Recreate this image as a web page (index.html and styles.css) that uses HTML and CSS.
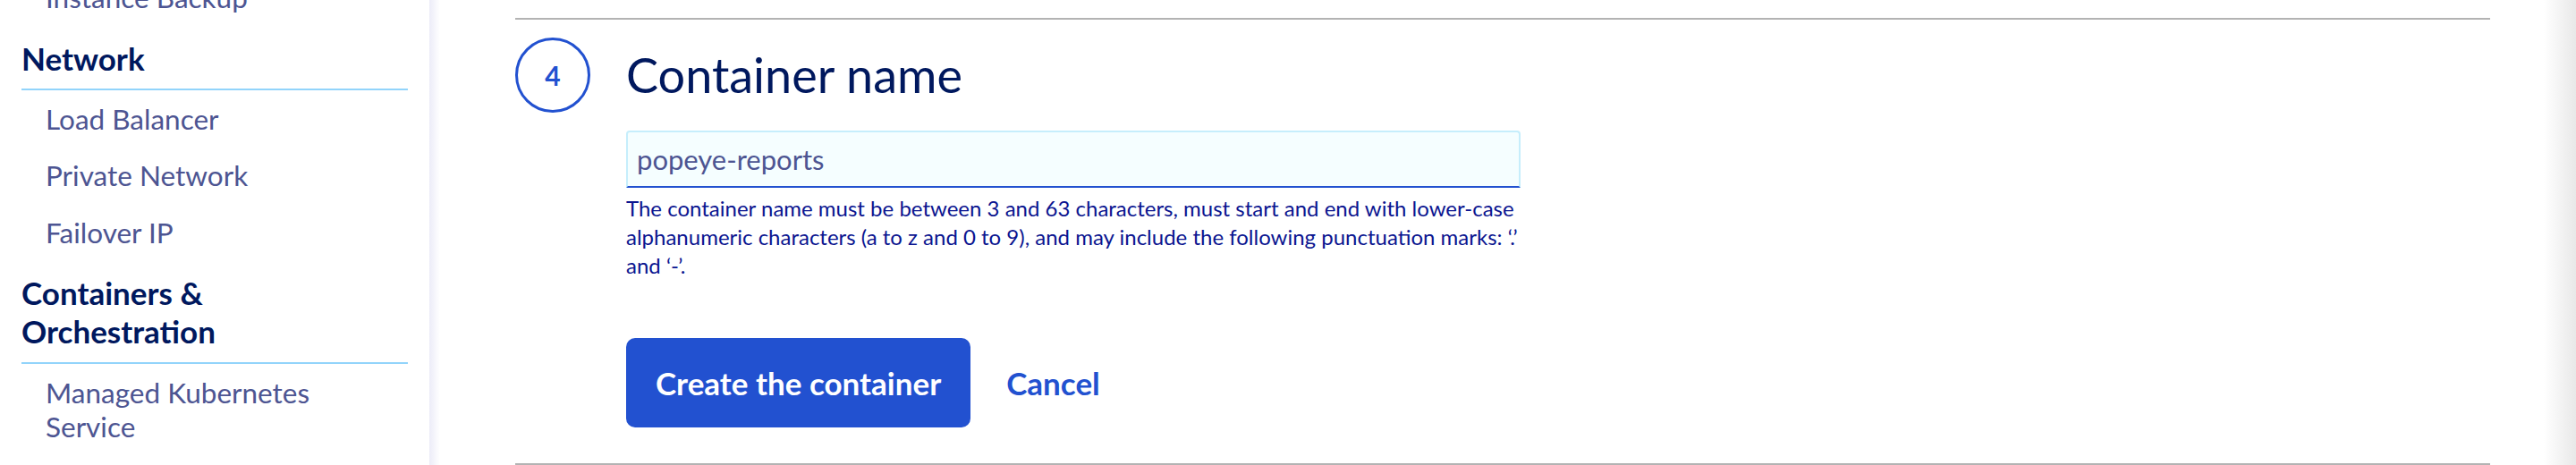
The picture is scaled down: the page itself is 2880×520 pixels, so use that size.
FILE: index.html
```html
<!DOCTYPE html>
<html lang="en">
<head>
<meta charset="utf-8">
<title>Create a container</title>
<link rel="stylesheet" href="styles.css">
</head>
<body>
<div class="page">
  <aside class="sidebar">
    <nav class="nav">
      <ul class="nav-items nav-items--scrolled">
        <li class="nav-item">Instance Backup</li>
      </ul>
      <section class="nav-group">
        <h3 class="nav-title">Network</h3>
        <ul class="nav-items">
          <li class="nav-item">Load Balancer</li>
          <li class="nav-item">Private Network</li>
          <li class="nav-item">Failover IP</li>
        </ul>
      </section>
      <section class="nav-group">
        <h3 class="nav-title">Containers &amp; Orchestration</h3>
        <ul class="nav-items">
          <li class="nav-item">Managed Kubernetes Service</li>
        </ul>
      </section>
    </nav>
  </aside>
  <main class="main">
    <section class="step">
      <div class="step-badge">4</div>
      <div class="step-body">
        <h2 class="step-title">Container name</h2>
        <input class="field" type="text" value="popeye-reports">
        <p class="help">The container name must be between 3 and 63 characters, must start and end with lower-case alphanumeric characters (a to z and 0 to 9), and may include the following punctuation marks: ‘.’ and ‘-’.</p>
        <div class="actions">
          <button class="btn-primary" type="button">Create the container</button>
          <a class="btn-link" href="#">Cancel</a>
        </div>
      </div>
    </section>
  </main>
</div>
</body>
</html>
```

FILE: styles.css
```css
* {
  box-sizing: border-box;
}

html, body {
  margin: 0;
  padding: 0;
  background: #ffffff;
}

body {
  font-family: Lato, "Liberation Sans", sans-serif;
  width: 2880px;
  height: 520px;
  overflow: hidden;
}

.page {
  display: flex;
  width: 2880px;
  height: 520px;
}

/* ---------- Sidebar ---------- */
.sidebar {
  width: 480px;
  flex-shrink: 0;
  padding: 0 24px;
  background: #ffffff;
  overflow: hidden;
}

.nav-items {
  list-style: none;
  margin: 0;
  padding: 0;
}

.nav-items--scrolled {
  margin-top: -35px;
}

.nav-item {
  font-size: 31.5px;
  line-height: 38px;
  padding: 12.75px 100px 12.75px 27px;
  color: #4d5592;
}

.nav-group {
  margin-top: 15px;
}

.nav-title {
  margin: 0;
  font-size: 35px;
  font-weight: 700;
  line-height: 43px;
  color: #00185e;
  padding: 0 100px 12.4px 0;
  border-bottom: 2px solid #92d4fb;
}

/* ---------- Main ---------- */
.main {
  flex: 1;
  padding: 20px 96px 0 96px;
  background:
    linear-gradient(to left, #e8e8e8 0, rgba(255, 255, 255, 0) 36px),
    linear-gradient(to right, #ececf8 0, rgba(255, 255, 255, 0) 12px),
    #ffffff;
}

.step {
  display: flex;
  gap: 40px;
  border-top: 2px solid #b3b3b3;
  border-bottom: 2px solid #b3b3b3;
  padding: 20px 0 40px 0;
}

.step-badge {
  width: 84px;
  height: 84px;
  flex-shrink: 0;
  border: 3.5px solid #2251d0;
  border-radius: 50%;
  display: flex;
  align-items: center;
  justify-content: center;
  color: #2251d0;
  font-size: 30px;
  font-weight: 700;
}

.step-body {
  display: flex;
  flex-direction: column;
  align-items: flex-start;
}

.step-title {
  margin: 0;
  font-size: 54px;
  font-weight: 400;
  line-height: 84px;
  color: #00185e;
}

.field {
  display: block;
  margin-top: 20px;
  width: 1000px;
  height: 64px;
  padding: 0 10px;
  border: 2px solid #c6eefc;
  border-bottom: 2px solid #2251d0;
  border-radius: 4px 4px 0 0;
  background: #f5feff;
  font-family: Lato, "Liberation Sans", sans-serif;
  font-size: 31px;
  color: #4d5592;
  outline: none;
}

.help {
  margin: 6.7px 0 0 0;
  width: 1000px;
  font-size: 24px;
  line-height: 32px;
  color: #0b1590;
}

.actions {
  display: flex;
  align-items: center;
  gap: 40px;
  margin-top: 65.3px;
}

.btn-primary {
  height: 100px;
  padding: 0 33px;
  border: none;
  border-radius: 10px;
  background: #2251d0;
  color: #ffffff;
  font-family: Lato, "Liberation Sans", sans-serif;
  font-size: 35px;
  font-weight: 700;
  cursor: pointer;
}

.btn-link {
  color: #2251d0;
  font-size: 35px;
  font-weight: 700;
  text-decoration: none;
}
```
